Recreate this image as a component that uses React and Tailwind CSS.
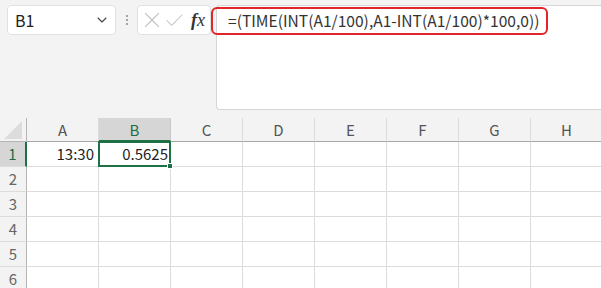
import { ChevronDown, X, Check } from 'lucide-react';

const COLS = ['A', 'B', 'C', 'D', 'E', 'F', 'G', 'H'];
const ROWS = [1, 2, 3, 4, 5, 6];
const FONT = { fontFamily: '"Noto Sans CJK JP", "Noto Sans", sans-serif' };

export default function App() {
  return (
    <div className="h-[288px] w-[601px] overflow-hidden bg-[#f3f3f3] text-[#333]" style={FONT}>
      {/* formula bar strip */}
      <div className="relative flex h-[110px] items-start pt-[5px] pl-[7px]">
        <div className="flex h-[30px] w-[109px] items-center justify-between rounded-[4px] border border-[#e0e0e0] bg-white pr-[5px] pl-[7px]">
          <span className="text-[16px] text-[#222]">B1</span>
          <ChevronDown className="h-4 w-4 text-[#444]" strokeWidth={1.6} />
        </div>
        <div className="flex h-[30px] w-[21px] flex-col items-center justify-center gap-[2px]">
          <span className="h-[2px] w-[2px] rounded-full bg-[#888]" />
          <span className="h-[2px] w-[2px] rounded-full bg-[#888]" />
          <span className="h-[2px] w-[2px] rounded-full bg-[#888]" />
        </div>
        <div className="flex h-[30px] w-[74px] items-center rounded-[4px] border border-[#e0e0e0] bg-white pl-[1px]">
          <X className="h-[26px] w-[26px] text-[#c4c4c4]" strokeWidth={1} />
          <Check className="-ml-[2px] h-[23px] w-[23px] text-[#c4c4c4]" strokeWidth={1.1} />
          <span className="ml-[5px] text-[18px] italic text-[#333]" style={{ fontFamily: '"Liberation Serif", serif' }}>
            <b>f</b>x
          </span>
        </div>
        <div className="ml-[5px] h-[105px] flex-1 rounded-l-[4px] border border-r-0 border-[#d6d6d6] bg-white" />
        <div className="absolute top-[7px] left-[211px] flex h-[28px] w-[337px] items-center rounded-[6px] border-2 border-[#e0262b] pl-[15px] text-[15.6px] whitespace-nowrap text-[#333]">
          =(TIME(INT(A1/100),A1-INT(A1/100)*100,0))
        </div>
      </div>

      {/* sheet */}
      <div className="mt-[8px] grid grid-cols-[27px_repeat(8,72px)] grid-rows-[24px_repeat(6,25px)]">
        <div className="relative border-r border-b border-[#b5b5b5] bg-[#f3f3f3]">
          <div className="absolute right-[4px] bottom-[2px] h-0 w-0 border-b-[18px] border-l-[18px] border-b-[#dcdcdc] border-l-transparent" />
        </div>
        {COLS.map((c) => (
          <div
            key={c}
            className={
              c === 'B'
                ? 'flex items-center justify-center border-r border-b-2 border-r-[#c8c8c8] border-b-[#1e7145] bg-[#d6d6d6] pt-[2px] text-[15px] text-[#1e6b41]'
                : 'flex items-center justify-center border-r border-b border-r-[#dcdcdc] border-b-[#a8a8a8] pt-[2px] text-[15px] text-[#555]'
            }
          >
            {c}
          </div>
        ))}
        {ROWS.map((r) => (
          <Row key={r} r={r} />
        ))}
      </div>
    </div>
  );
}

function Row({ r }) {
  const sel = r === 1;
  return (
    <>
      <div
        className={
          sel
            ? 'flex items-center justify-center border-r-2 border-b border-r-[#1e7145] border-b-[#dcdcdc] bg-[#d6d6d6] text-[15px] text-[#1e6b41]'
            : 'flex items-center justify-center border-r border-b border-r-[#b5b5b5] border-b-[#dcdcdc] bg-[#f3f3f3] text-[15px] text-[#666]'
        }
      >
        {r}
      </div>
      {COLS.map((c) => {
        if (sel && c === 'B') {
          return (
            <div key={c} className="relative -mt-px -ml-px flex items-center justify-end border-2 border-[#1e7145] bg-white pr-[1px] text-[15px] text-[#222]">
              0.5625
              <span className="absolute -right-[4px] -bottom-[4px] h-[6px] w-[6px] border border-white bg-[#1e7145]" />
            </div>
          );
        }
        return (
          <div key={c} className="flex items-center justify-end border-r border-b border-[#dcdcdc] bg-white pr-[4px] text-[15px] text-[#222]">
            {sel && c === 'A' ? '13:30' : ''}
          </div>
        );
      })}
    </>
  );
}
